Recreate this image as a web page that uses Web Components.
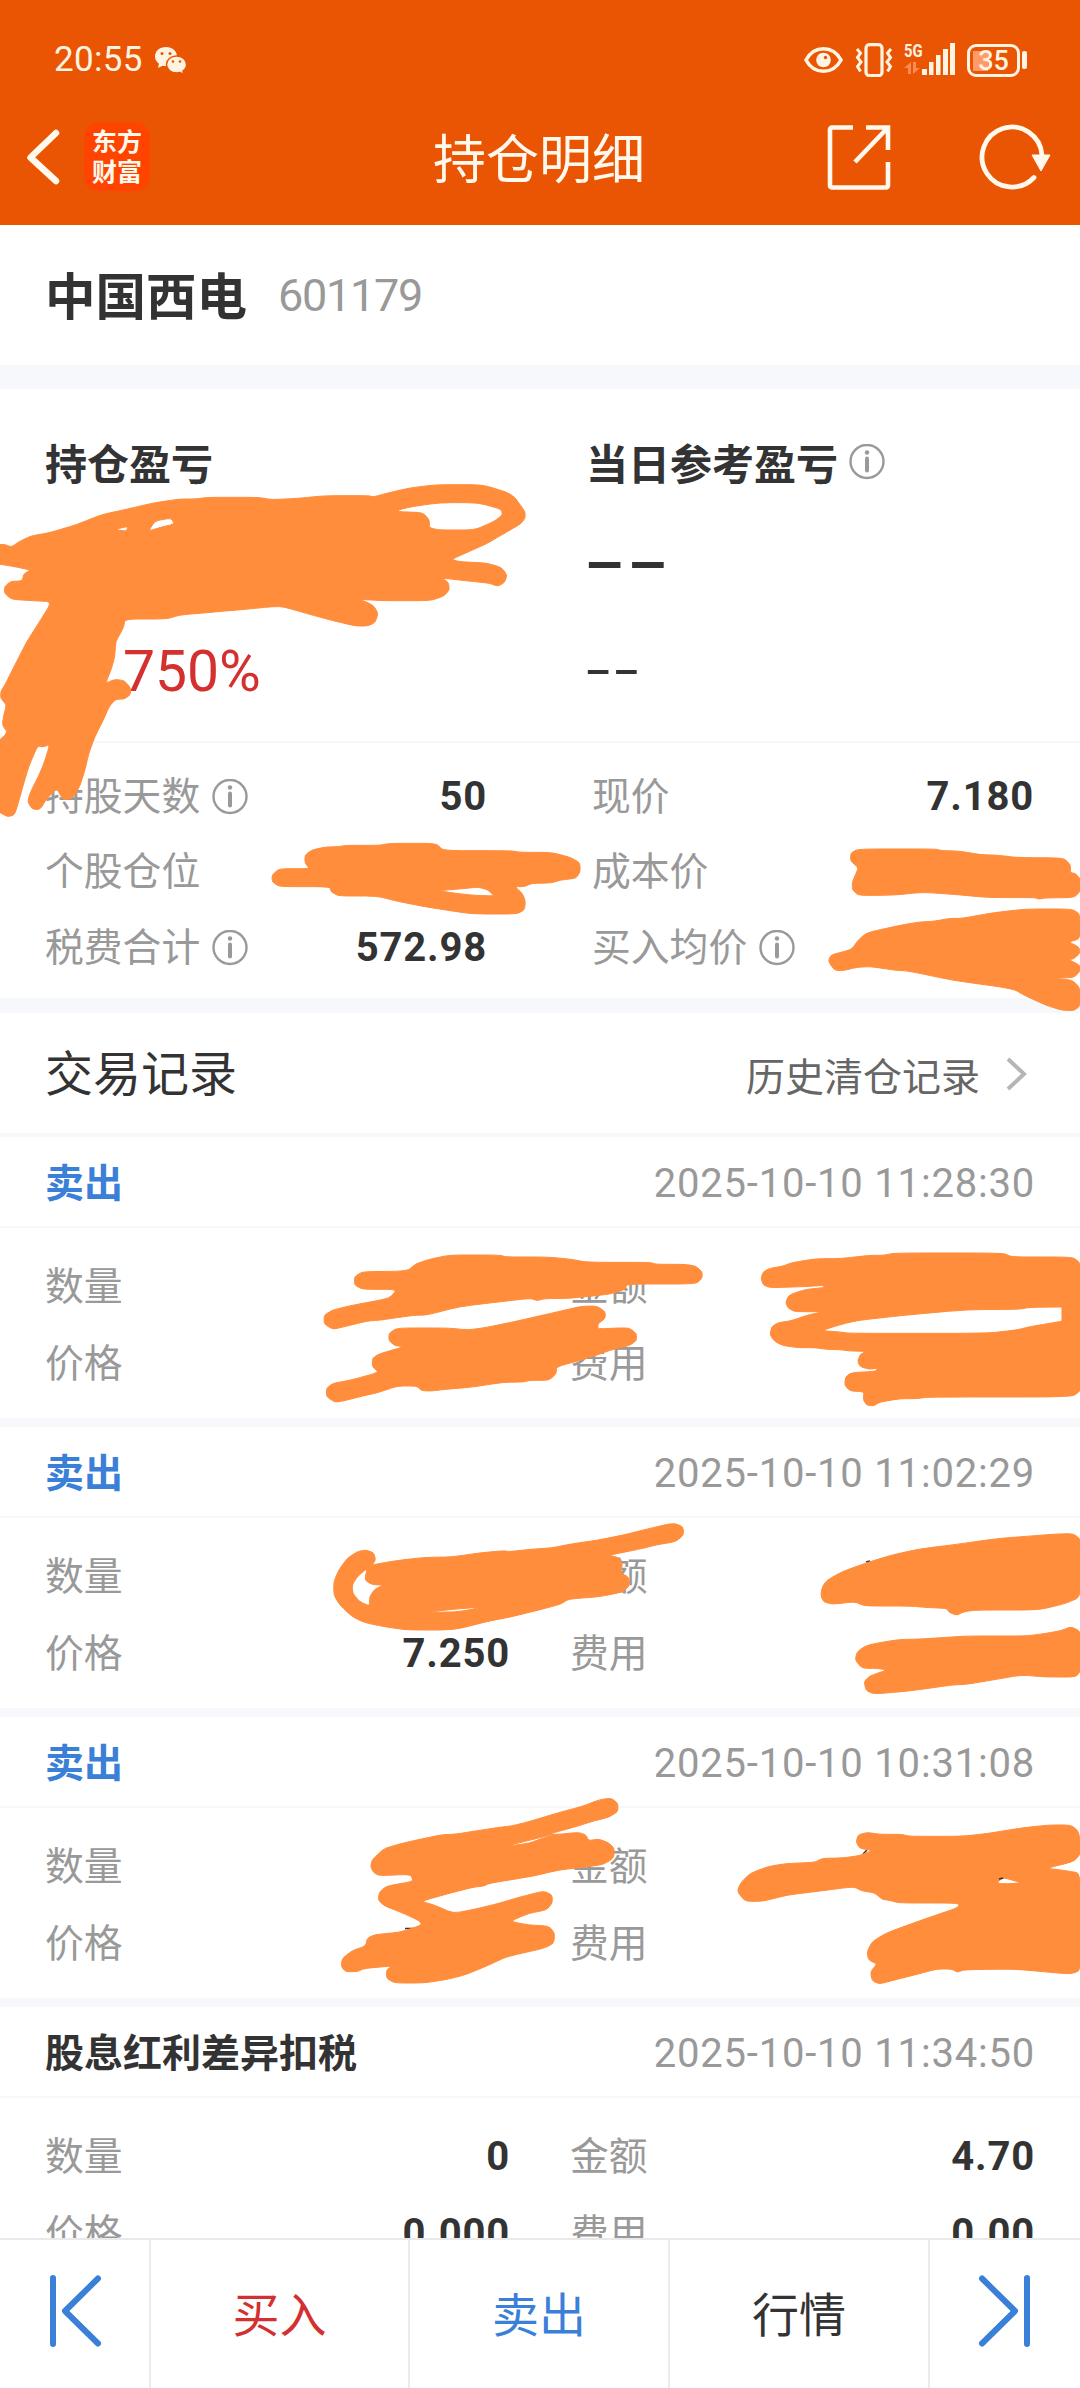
<!DOCTYPE html>
<html lang="zh-CN">
<head>
<meta charset="UTF-8">
<meta name="viewport" content="width=device-width, initial-scale=1.0">
<title>持仓明细</title>
<style>
  html, body {
    margin: 0;
    padding: 0;
  }
  body {
    width: 1080px;
    height: 2388px;
    overflow: hidden;
    background: #fff;
    color: #333;
    font-family: Roboto, "Noto Sans CJK SC", sans-serif;
    --blue: #3a80d8;
    --red: #d3302f;
    --gray: #999;
    --band: #f6f8fb;
  }
</style>
</head>
<body>
<position-page></position-page>

<script>
// 상태바
class StatusBar extends HTMLElement {
  constructor() {
    super();
    this.attachShadow({ mode: "open" });
    this.shadowRoot.innerHTML = /*HTML*/ `
      <style>
        :host {
          display: flex;
          justify-content: space-between;
          align-items: center;
          height: 34px;
          padding: 43px 53px 0 54px;
          color: #fff3e2;
        }
        .left, .right { display: flex; align-items: center; height: 34px; }
        .time { font-size: 35px; line-height: 34px; letter-spacing: .3px; margin-right: 11px; }
        svg { display: block; }
        .eye { margin-right: 12px; }
        .vibrate { margin-right: 11px; }
        .network { display: grid; grid-template-columns: 18px 34px; height: 34px; margin-right: 11px; }
        .gen { font-size: 19px; font-weight: 700; line-height: 16px; transform: scaleX(.78); transform-origin: left; }
        .bars { grid-column: 2; grid-row: 1 / 3; }
        .battery { display: flex; align-items: center; gap: 2px; }
        .cell {
          box-sizing: border-box;
          width: 53px;
          height: 33px;
          border: 3px solid currentColor;
          border-radius: 9px;
          text-align: center;
          font-size: 27px;
          font-weight: 500;
          line-height: 28px;
          background: linear-gradient(#ff9b69, #ff9b69) 3px 4px / 15px 20px no-repeat;
        }
        .tip { width: 5px; height: 18px; border-radius: 2px; background: currentColor; }
      </style>
      <div class="left">
        <span class="time">20:55</span>
        <svg width="34" height="30" viewBox="0 0 34 30">
          <path d="M12 2C5.500 2 1 6 1 11.500c0 3 1.500 5.500 4 7.200L4 23l4.500-2.300c1.200.3 2.300.4 3.500.4 6.200 0 11-4.200 11-9.600S18.200 2 12 2z" fill="currentColor"/>
          <path d="M22.500 11C16.800 11 12.500 14.800 12.500 19.500S16.800 28 22.500 28c1.200 0 2.300-.2 3.400-.5l4 2-1-3.500c2.400-1.600 3.700-3.900 3.700-6.500 0-4.700-4.400-8.500-10.100-8.500z" fill="currentColor" stroke="#ea5504" stroke-width="1.500"/>
          <g fill="#ea5504"><circle cx="8" cy="8.500" r="1.500"/><circle cx="16" cy="8.500" r="1.500"/><circle cx="19" cy="16.500" r="1.300"/><circle cx="26" cy="16.500" r="1.300"/></g>
        </svg>
      </div>
      <div class="right">
        <svg class="eye" width="39" height="28" viewBox="0 0 39 28">
          <path d="M2 14C10-1 29-1 37 14 29 29 10 29 2 14z" fill="none" stroke="currentColor" stroke-width="3.600"/>
          <circle cx="19.500" cy="14" r="7.300" fill="currentColor"/><circle cx="21.500" cy="11.500" r="1.700" fill="#ea5504"/>
        </svg>
        <svg class="vibrate" width="38" height="34" viewBox="0 0 38 34">
          <rect x="11" y="1.700" width="16" height="31" rx="3.500" fill="none" stroke="currentColor" stroke-width="3.200"/>
          <path d="M2 6l3.500 4L2.500 14.500l3.500 4.500-3.500 4.500 3 5M36 6l-3.500 4 3 4.500-3.500 4.500 3.500 4.500-3 5" fill="none" stroke="currentColor" stroke-width="3"/>
        </svg>
        <div class="network">
          <span class="gen">5G</span>
          <svg class="bars" width="34" height="34" viewBox="0 0 34 34">
            <path d="M0 26h5v6H0zM7 19h4.500v13H7zM14 12h4.500v20H14zM21 6h5v26h-5zM28 0h5v32h-5z" fill="currentColor"/>
          </svg>
          <svg width="18" height="16" viewBox="0 0 18 16" fill="#ff8a55">
            <path d="M7 2v12H4V8H0zM9 2h3v6h4l-7 6z"/>
          </svg>
        </div>
        <div class="battery"><div class="cell">35</div><div class="tip"></div></div>
      </div>
    `;
  }
}
customElements.define("status-bar", StatusBar);

// 상단 네비게이션
class NavBar extends HTMLElement {
  constructor() {
    super();
    this.attachShadow({ mode: "open" });
    this.shadowRoot.innerHTML = /*HTML*/ `
      <style>
        :host {
          display: grid;
          grid-template-columns: 1fr auto 1fr;
          align-items: center;
          height: 70px;
          padding: 45px 28px 0 26px;
          color: #fff8ec;
        }
        .left, .right { display: flex; align-items: center; }
        .right { justify-content: flex-end; gap: 88px; }
        .logo {
          width: 66px;
          height: 68px;
          border-radius: 14px;
          background: #ff4400;
          margin-left: 24px;
          font-size: 25px;
          font-weight: 700;
          line-height: 30px;
          text-align: center;
          box-sizing: border-box;
          padding-top: 5px;
        }
        .logo span { display: block; }
        .title { font-size: 53px; line-height: 60px; padding-top: 7px; }
        svg { display: block; fill: none; stroke: currentColor; }
      </style>
      <div class="left">
        <svg width="34" height="60" viewBox="0 0 34 60" stroke-width="6.500" stroke-linecap="round" stroke-linejoin="round"><path d="M30 6 4.500 30.500 30 54"/></svg>
        <div class="logo"><span>东方</span><span>财富</span></div>
      </div>
      <div class="title"><slot></slot></div>
      <div class="right">
        <svg width="64" height="66" viewBox="0 0 64 66" stroke-width="4.600"><path d="M26 3.500H5a2 2 0 0 0-2 2v56a2 2 0 0 0 2 2h54a2 2 0 0 0 2-2V38M39 3.500h22V26M61 3.500 28 38"/></svg>
        <svg width="73" height="66" viewBox="0 0 73 66" stroke-width="4.800"><path d="M55 53.500A30 30 0 1 1 63 31" stroke-linecap="round"/><path d="M53 31h18l-9 16z" fill="currentColor" stroke-width="1"/></svg>
      </div>
    `;
  }
}
customElements.define("nav-bar", NavBar);

// 안내 아이콘
class InfoIcon extends HTMLElement {
  constructor() {
    super();
    this.attachShadow({ mode: "open" });
    this.shadowRoot.innerHTML = /*HTML*/ `
      <style>
        :host { display: block; width: 36px; height: 36px; margin-left: 12px; }
        svg { display: block; }
      </style>
      <svg width="36" height="36" viewBox="0 0 36 36" fill="none" stroke="#999" stroke-width="2.400">
        <circle cx="18" cy="17.500" r="16.500"/>
        <path d="M18 14.500v12" stroke-width="4" stroke-linecap="round"/>
        <circle cx="18" cy="8.500" r="2.200" fill="#999" stroke="none"/>
      </svg>
    `;
  }
}
customElements.define("info-icon", InfoIcon);

// 라벨 + 값 한 줄
class DataItem extends HTMLElement {
  connectedCallback() {
    if (this.shadowRoot) return;
    this.attachShadow({ mode: "open" });
    const label = this.getAttribute("label") || "";
    const value = this.getAttribute("value") || "";
    this.shadowRoot.innerHTML = /*HTML*/ `
      <style>
        :host { display: flex; align-items: center; min-width: 0; }
        .label { font-size: 38.800px; color: var(--gray); line-height: 60px; }
        .value { margin-left: auto; font-size: 40px; font-weight: 700; line-height: 60px; letter-spacing: .8px; }
      </style>
      <span class="label">${label}</span>
      ${this.hasAttribute("info") ? "<info-icon></info-icon>" : ""}
      <span class="value">${value}</span>
    `;
  }
}
customElements.define("data-item", DataItem);

// 보유 손익 요약
class ProfitSummary extends HTMLElement {
  constructor() {
    super();
    this.attachShadow({ mode: "open" });
    this.shadowRoot.innerHTML = /*HTML*/ `
      <style>
        :host { display: block; }
        .top {
          display: grid;
          grid-template-columns: 541px 1fr;
          height: 354px;
          padding-left: 45px;
          box-sizing: border-box;
          border-bottom: 2px solid #f7f8f8;
        }
        .col { display: flex; flex-direction: column; }
        .title { display: flex; align-items: center; height: 60px; margin-top: 42px; font-size: 42px; font-weight: 700; }
        .title info-icon { margin-top: 2px; margin-left: 11px; }
        .amount { height: 90px; margin-top: 29px; }
        .rate { height: 80px; margin-top: 21px; }
        .amount, .rate { display: flex; align-items: center; }
        .red { color: var(--red); font-size: 57px; padding-left: 78px; }
        .dash { font-family: "DejaVu Sans", sans-serif; transform: scaleX(1.6); transform-origin: left; }
        .amount .dash { font-size: 75px; line-height: 75px; padding-bottom: 10px; margin-left: -3px; }
        .rate .dash { font-size: 49px; line-height: 50px; margin-left: -2px; padding-bottom: 3px; }
        .grid {
          display: grid;
          grid-template-columns: 442px 442px;
          column-gap: 105px;
          grid-auto-rows: 75.500px;
          height: 255px;
          box-sizing: border-box;
          padding: 16px 45px 0;
        }
      </style>
      <div class="top">
        <div class="col">
          <div class="title">持仓盈亏</div>
          <div class="amount"></div>
          <div class="rate red">750%</div>
        </div>
        <div class="col">
          <div class="title">当日参考盈亏<info-icon></info-icon></div>
          <div class="amount"><span class="dash">--</span></div>
          <div class="rate"><span class="dash">--</span></div>
        </div>
      </div>
      <div class="grid">
        <data-item label="持股天数" value="50" info></data-item>
        <data-item label="现价" value="7.180"></data-item>
        <data-item label="个股仓位"></data-item>
        <data-item label="成本价"></data-item>
        <data-item label="税费合计" value="572.98" info></data-item>
        <data-item label="买入均价" info></data-item>
      </div>
    `;
  }
}
customElements.define("profit-summary", ProfitSummary);

// 거래 기록 카드
class TradeRecord extends HTMLElement {
  connectedCallback() {
    if (this.shadowRoot) return;
    this.attachShadow({ mode: "open" });
    const get = (name) => this.getAttribute(name) || "";
    this.shadowRoot.innerHTML = /*HTML*/ `
      <style>
        :host { display: block; height: 290px; box-sizing: border-box; border-bottom: 9px solid var(--band); flex: none; }
        .head {
          display: flex;
          align-items: center;
          justify-content: space-between;
          height: 91px;
          padding: 0 45px 0 45px;
          box-sizing: border-box;
          border-bottom: 2px solid #f7f8f8;
        }
        .type { font-size: 39px; font-weight: 700; padding-bottom: 4px; }
        .sell { color: var(--blue); }
        .time { font-size: 40px; color: var(--gray); letter-spacing: .8px; padding-top: 3px; }
        .grid {
          display: grid;
          grid-template-columns: 465px 465px;
          column-gap: 60px;
          grid-auto-rows: 77px;
          padding: 20px 45px 0;
        }
      </style>
      <div class="head">
        <span class="type ${get("kind")}">${get("type")}</span>
        <span class="time">${get("time")}</span>
      </div>
      <div class="grid">
        <data-item label="数量" value="${get("count")}"></data-item>
        <data-item label="金额" value="${get("amount")}"></data-item>
        <data-item label="价格" value="${get("price")}"></data-item>
        <data-item label="费用" value="${get("fee")}"></data-item>
      </div>
    `;
  }
}
customElements.define("trade-record", TradeRecord);

// 하단 버튼 바
class BottomBar extends HTMLElement {
  constructor() {
    super();
    this.attachShadow({ mode: "open" });
    this.shadowRoot.innerHTML = /*HTML*/ `
      <style>
        :host {
          display: grid;
          grid-template-columns: 151px 259px 260px 260px 150px;
          height: 150px;
          flex: none;
          box-sizing: border-box;
          border-top: 2px solid #e9e9e9;
          background: #fff;
        }
        div {
          display: flex;
          align-items: center;
          justify-content: center;
          font-size: 47px;
          border-right: 2px solid #ebebeb;
          padding-bottom: 6px;
        }
        div:last-child { border-right: none; }
        .buy { color: var(--red); }
        .sell { color: var(--blue); }
        svg { fill: none; stroke: var(--blue); stroke-width: 6; stroke-linecap: round; stroke-linejoin: round; }
      </style>
      <div><svg width="54" height="74" viewBox="0 0 54 74"><path d="M5 4v66M50 4.500 17 37l33 32.500"/></svg></div>
      <div class="buy">买入</div>
      <div class="sell">卖出</div>
      <div>行情</div>
      <div><svg width="54" height="74" viewBox="0 0 54 74"><path d="M49 4v66M4 4.500 37 37 4 69.500"/></svg></div>
    `;
  }
}
customElements.define("bottom-bar", BottomBar);

// 손으로 그린 가림 자국. 각 항목: 좌표계 변환 + 외곽선 (나머지는 구멍)
const MARKS = [
  ["translate(0 400) scale(.38270 .33333)", [
    "-30,435 12,433 30,441 50,425 80,408 130,398 200,374 265,344 330,328 400,309 470,297 510,297 545,292 675,292 710,299 780,295 850,287 965,287 975,291 1010,280 1070,264 1140,254 1260,254 1325,277 1345,292 1355,308 1372,335 1372,355 1360,372 1330,392 1300,412 1270,432 1225,455 1180,478 1200,485 1270,489 1310,502 1325,525 1318,548 1300,559 1280,550 1250,546 1215,542 1155,534 1172,548 1174,570 1160,588 1125,602 1000,602 940,598 975,615 988,640 980,668 960,678 930,678 870,662 800,640 740,620 710,620 650,627 560,636 470,645 435,657 327,657 322,685 302,725 300,770 290,810 276,850 300,838 325,842 342,865 340,885 325,897 302,898 285,920 270,960 248,1010 232,1060 222,1110 208,1160 190,1195 165,1200 148,1165 120,1200 105,1228 85,1228 72,1205 80,1175 100,1130 115,1090 130,1034 112,1041 98,1038 75,1100 62,1150 50,1200 38,1245 20,1250 3,1240 -20,1220 -20,1040 20,998 6,975 10,945 17,915 2,895 2,875 15,850 30,815 50,770 70,725 95,680 136,605 85,602 30,598 12,580 12,560 28,544 58,543 62,522 80,510 30,498 -30,488",
    "1040,330 1075,320 1150,308 1250,308 1310,328 1313,345 1290,365 1240,390 1150,390 1122,384 1122,360 1105,338 1045,335",
    "300,388 335,379 330,394",
    "405,363 447,354 456,372 420,382 388,393"
  ]],
  ["translate(0 720) scale(.38270 .33333)", [
    "810,446 797,430 797,405 815,390 850,381 885,380 905,376 990,376 1020,370 1140,370 1158,392 1335,392 1360,397 1440,397 1490,412 1515,428 1516,455 1505,475 1465,480 1440,489 1390,490 1370,500 1345,500 1365,520 1373,545 1370,570 1350,582 1235,582 1165,570 1110,560 1035,543 985,528 885,528 865,515 862,500 730,500 711,485 711,465 730,446",
    "1145,512 1210,506 1250,501 1275,510 1292,528 1240,526 1190,520"
  ]],
  ["translate(540 400) scale(.34439 .40816)", [
    "925,1100 1150,1100 1165,1104 1215,1105 1280,1114 1325,1115 1385,1121 1520,1122 1540,1138 1540,1158 1555,1160 1570,1175 1568,1205 1550,1219 1465,1220 1450,1223 1435,1219 1300,1219 1200,1211 1110,1206 1030,1213 925,1214 907,1200 907,1180 925,1146 902,1130 902,1110"
  ]],
  ["translate(540 400) scale(.34439 .40816)", [
    "837,1375 845,1360 870,1354 905,1346 925,1322 950,1305 1040,1288 1100,1279 1145,1277 1190,1270 1225,1270 1310,1257 1410,1247 1545,1247 1568,1260 1568,1320 1535,1328 1565,1340 1568,1355 1550,1369 1535,1371 1568,1385 1568,1400 1550,1415 1490,1417 1545,1421 1568,1440 1568,1485 1550,1496 1515,1495 1470,1483 1405,1458 1380,1445 1330,1437 1200,1422 1070,1399 1030,1397 960,1388 920,1390 880,1398 855,1397"
  ]],
  ["translate(0 1020) scale(.45918 .33333)", [
    "790,755 865,754 890,750 905,732 935,718 980,705 1085,705 1105,711 1190,711 1240,717 1280,727 1415,727 1430,733 1490,733 1515,738 1529,755 1529,775 1515,792 1365,792 1362,808 1330,822 1290,828 1240,835 1185,836 1170,842 1155,835 1090,845 1000,860 930,885 900,886 825,901 800,903 750,920 725,928 706,912 706,885 725,870 760,858 790,850 848,835 865,808 790,808 772,795 772,770"
  ]],
  ["translate(0 1020) scale(.45918 .33333)", [
    "865,924 975,924 1020,930 1060,922 1120,905 1200,880 1265,859 1300,858 1318,875 1318,895 1302,912 1302,927 1345,924 1370,924 1386,940 1386,962 1370,977 1330,990 1280,1015 1212,1040 1211,1062 1195,1081 1155,1081 1140,1086 1095,1087 1030,1101 970,1108 940,1113 918,1112 908,1098 865,1098 825,1117 790,1128 750,1142 730,1147 711,1130 711,1105 725,1090 765,1080 825,1057 811,1040 811,1015 825,1002 880,980 860,977 847,962 847,940"
  ]],
  ["translate(640 1020) scale(.33333 .33333)", [
    "363,775 370,755 390,745 430,738 455,728 530,716 600,716 690,706 730,706 765,699 1090,699 1115,711 1295,711 1318,725 1325,760 1325,1110 1295,1131 865,1131 830,1136 780,1136 720,1146 700,1158 680,1155 670,1140 672,1115 630,1113 614,1095 617,1070 635,1058 708,1054 712,1044 690,1048 660,1040 653,1022 662,1002 680,994 630,993 600,989 560,988 525,983 475,983 430,977 405,965 390,945 395,920 415,908 455,902 500,886 550,875 465,875 445,865 437,848 445,828 465,818 500,808 552,803 550,796 510,799 460,801 390,803 370,795",
    "545,932 600,914 655,901 800,885 980,869 1135,868 1170,862 1264,861 1266,861 1266,903 1264,904 1170,920 1130,930 1040,940 630,940 600,936"
  ]],
  ["translate(300 1420) scale(.49745 .33333)", [
    "132,390 148,398 152,420 145,435 180,425 215,418 255,412 305,411 360,399 410,392 420,395 470,387 505,384 545,372 600,360 650,345 690,330 750,309 770,320 771,345 755,365 715,375 690,385 620,406 640,412 648,430 645,460 660,470 663,495 650,515 620,525 595,531 540,537 525,552 480,570 420,592 380,603 310,630 215,630 170,620 130,608 105,590 80,555 68,525 68,485 78,450 95,415 115,395",
    "135,445 115,470 105,495 106,520 120,545 140,558 140,530 150,508 168,495 145,494 130,480",
    "255,577 300,569 365,561 340,570 310,576"
  ]],
  ["translate(300 1420) scale(.49745 .33333)", [
    "1050,500 1060,480 1090,455 1140,428 1190,405 1245,387 1320,373 1400,356 1460,349 1520,342 1555,341 1570,360 1570,530 1540,550 1485,570 1360,570 1335,575 1320,586 1305,577 1300,565 1265,563 1225,558 1135,558 1115,545 1070,553 1052,545 1047,525"
  ]],
  ["translate(300 1420) scale(.49745 .33333)", [
    "1116,720 1120,695 1140,675 1200,659 1250,657 1290,653 1340,648 1460,648 1500,640 1530,632 1550,620 1570,635 1570,750 1560,771 1500,771 1450,765 1400,778 1340,793 1310,795 1250,808 1210,815 1155,822 1138,812 1134,785 1145,768 1180,750 1160,745 1130,745"
  ]],
  ["translate(300 1710) scale(.49745 .33333)", [
    "142,470 145,450 155,435 170,415 210,398 285,374 310,373 400,352 425,348 460,335 520,308 570,288 600,270 625,264 639,280 639,305 620,322 590,333 550,352 500,372 520,373 560,367 575,375 580,392 600,387 620,398 632,415 630,445 610,463 580,470 520,480 470,498 380,520 370,528 350,531 300,550 243,574 270,585 308,610 350,598 400,580 440,562 490,543 507,555 507,580 495,600 460,610 422,634 460,645 500,648 512,670 510,700 490,715 415,740 380,765 335,793 300,807 250,819 190,819 174,805 174,780 185,768 130,775 115,785 92,785 83,770 85,745 105,722 132,708 135,685 150,674 200,667 245,645 240,632 200,605 170,588 157,570 160,545 175,528 228,514 222,493 160,497 148,488",
    "413,409 450,395 485,382 506,373 508,375 485,386 460,400"
  ]],
  ["translate(300 1710) scale(.49745 .33333)", [
    "879,545 885,520 905,490 940,470 975,461 1035,457 1050,445 1090,444 1125,437 1150,421 1125,415 1118,395 1122,375 1140,367 1165,373 1210,373 1225,379 1330,379 1380,371 1450,354 1505,345 1550,345 1566,365 1570,430 1555,455 1500,475 1540,482 1570,490 1570,780 1550,792 1500,786 1435,777 1335,779 1322,787 1310,777 1280,777 1235,795 1195,810 1165,822 1150,812 1147,785 1160,762 1143,750 1140,725 1150,695 1180,668 1250,630 1323,593 1325,579 1205,579 1185,571 1170,568 1155,548 1130,543 1113,530 1040,544 980,555 930,574 895,574",
    "1405,512 1415,503 1450,518 1430,521 1403,521"
  ]]
];

class InkLayer extends HTMLElement {
  constructor() {
    super();
    this.attachShadow({ mode: "open" });
    const paths = MARKS.map(([transform, loops]) =>
      `<path class="ink" transform="${transform}" d="${loops.map((l) => this.smooth(l)).join("")}"/>`
    ).join("");
    this.shadowRoot.innerHTML = /*HTML*/ `
      <style>
        :host { position: absolute; top: 0; left: 0; pointer-events: none; }
        svg { display: block; }
        .ink { stroke: #ff8d3b; stroke-width: 1px; stroke-linejoin: round; vector-effect: non-scaling-stroke; }
      </style>
      <svg width="1080" height="2388" viewBox="0 0 1080 2388" fill="#ff8d3b" fill-rule="evenodd">
        <path d="M405 1928.500h8M863 1854l4-4M866 1562l4-1" stroke="#333" stroke-width="1.500"/>
        ${paths}
        <path d="M999 1879l4-1" stroke="#333" stroke-width="1.500"/>
      </svg>
    `;
  }

  // 모서리만 살짝 둥글린 외곽선
  smooth(text) {
    const pts = text.split(" ").map((p) => p.split(",").map(Number));
    const near = (a, b) => `${a[0] + (b[0] - a[0]) * 0.3} ${a[1] + (b[1] - a[1]) * 0.3}`;
    return pts.map((p, i) => {
      const prev = pts[(i + pts.length - 1) % pts.length];
      const next = pts[(i + 1) % pts.length];
      return `${i ? "L" : "M"}${near(p, prev)}Q${p[0]} ${p[1]} ${near(p, next)}`;
    }).join("") + "Z";
  }
}
customElements.define("ink-layer", InkLayer);

// 페이지
class PositionPage extends HTMLElement {
  constructor() {
    super();
    this.attachShadow({ mode: "open" });
    this.shadowRoot.innerHTML = /*HTML*/ `
      <style>
        :host { display: flex; flex-direction: column; width: 1080px; height: 2388px; position: relative; overflow: hidden; }
        header { height: 225px; flex: none; background: #ea5504; }
        main { flex: 1; min-height: 0; overflow: hidden; display: flex; flex-direction: column; }
        .stock { display: flex; align-items: center; height: 140px; padding-left: 45px; flex: none; }
        .name { font-size: 50.500px; font-weight: 700; padding-bottom: 5px; }
        .code { font-size: 45px; color: var(--gray); letter-spacing: -1.300px; margin-left: 31px; }
        .band { height: 24px; background: var(--band); flex: none; }
        .band.small { height: 15px; }
        profit-summary { flex: none; }
        .records {
          display: flex;
          align-items: center;
          justify-content: space-between;
          height: 124px;
          flex: none;
          box-sizing: border-box;
          padding: 0 52px 0 45px;
          border-bottom: 4px solid #f6f8f9;
        }
        .records b { font-size: 48px; font-weight: 400; padding-bottom: 6px; }
        .history { display: flex; align-items: center; font-size: 39px; color: #666; gap: 25px; padding-top: 2px; }
      </style>
      <header>
        <status-bar></status-bar>
        <nav-bar>持仓明细</nav-bar>
      </header>
      <main>
        <div class="stock"><span class="name">中国西电</span><span class="code">601179</span></div>
        <div class="band"></div>
        <profit-summary></profit-summary>
        <div class="band small"></div>
        <div class="records">
          <b>交易记录</b>
          <div class="history">历史清仓记录
            <svg width="23" height="36" viewBox="0 0 23 36" fill="none" stroke="#b5b5b5" stroke-width="4"><path d="M3 3l16 15L3 33"/></svg>
          </div>
        </div>
        <trade-record kind="sell" type="卖出" time="2025-10-10 11:28:30"></trade-record>
        <trade-record kind="sell" type="卖出" time="2025-10-10 11:02:29" price="7.250"></trade-record>
        <trade-record kind="sell" type="卖出" time="2025-10-10 10:31:08"></trade-record>
        <trade-record type="股息红利差异扣税" time="2025-10-10 11:34:50" count="0" amount="4.70" price="0.000" fee="0.00"></trade-record>
      </main>
      <bottom-bar></bottom-bar>
      <ink-layer></ink-layer>
    `;
  }
}
customElements.define("position-page", PositionPage);
</script>
</body>
</html>
